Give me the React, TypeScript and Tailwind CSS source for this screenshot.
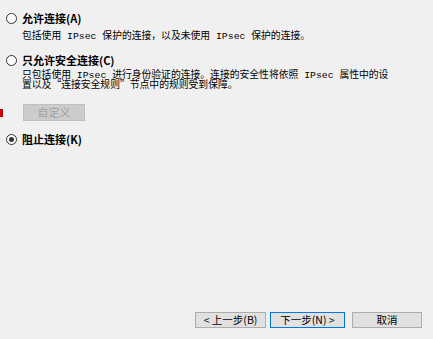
import type { ReactNode } from "react";

const cjk = "font-['Noto_Sans_CJK_SC','Noto_Sans',sans-serif]";

function Radio({ checked }: { checked?: boolean }) {
  return (
    <span className="flex h-[11px] w-[11px] shrink-0 items-center justify-center rounded-full border border-[#333333] bg-white">
      {checked ? <span className="h-[5px] w-[5px] rounded-full bg-[#333333]" /> : null}
    </span>
  );
}

function Option({ label, checked }: { label: string; checked?: boolean }) {
  return (
    <div className="flex h-[12px] items-center gap-[5px]">
      <Radio checked={checked} />
      <span className="text-[11px] leading-[12px] font-bold text-black">{label}</span>
    </div>
  );
}

// latin runs in the description are half-width, like the dialog's bitmap font
function Mono({ children }: { children: ReactNode }) {
  return (
    <span className="font-['Liberation_Mono',monospace] text-[9.8px] leading-[0] whitespace-pre">{children}</span>
  );
}

function WizButton({ children, focused }: { children: ReactNode; focused?: boolean }) {
  return (
    <button
      className={
        "flex h-[16px] w-full items-center justify-center border bg-[#e1e1e1] text-[10.5px] leading-none text-black " +
        (focused ? "border-[#0078d7]" : "border-[#adadad]")
      }
    >
      {children}
    </button>
  );
}

export default function App() {
  return (
    <div className={`flex h-[339px] w-[433px] flex-col bg-[#f0f0f0] text-black ${cjk}`}>
      <div className="flex flex-col pt-[12px] pl-[6px]">
        <Option label="允许连接(A)" />
        <p className="mt-[6px] pl-[16px] text-[9.8px] leading-[10px] whitespace-nowrap">
          包括使用<Mono> IPsec </Mono>保护的连接，以及未使用<Mono> IPsec </Mono>保护的连接。
        </p>

        <div className="mt-[14px]">
          <Option label="只允许安全连接(C)" />
        </div>
        <p className="mt-[3px] pl-[16px] text-[9.8px] leading-[10px] whitespace-nowrap">
          只包括使用<Mono> IPsec </Mono>进行身份验证的连接。连接的安全性将依照<Mono> IPsec </Mono>属性中的设
          <br />
          置以及“连接安全规则”节点中的规则受到保障。
        </p>

        <div className="mt-[15px] -ml-[6px] flex items-center">
          <span className="h-[8px] w-[3px] bg-[#c00000]" />
          <span className="ml-[20px] flex h-[17px] w-[62px] items-center justify-center border border-[#bfbfbf] bg-[#cccccc] text-[11px] text-[#a0a0a0]">
            自定义
          </span>
        </div>

        <div className="mt-[12px]">
          <Option label="阻止连接(K)" checked />
        </div>
      </div>

      <div className="mt-auto flex justify-end pr-[11px] pb-[11px]">
        <div className="w-[71px]">
          <WizButton>&lt; 上一步(B)</WizButton>
        </div>
        <div className="ml-[4px] w-[75px]">
          <WizButton focused>下一步(N) &gt;</WizButton>
        </div>
        <div className="ml-[7px] w-[70px]">
          <WizButton>取消</WizButton>
        </div>
      </div>
    </div>
  );
}
